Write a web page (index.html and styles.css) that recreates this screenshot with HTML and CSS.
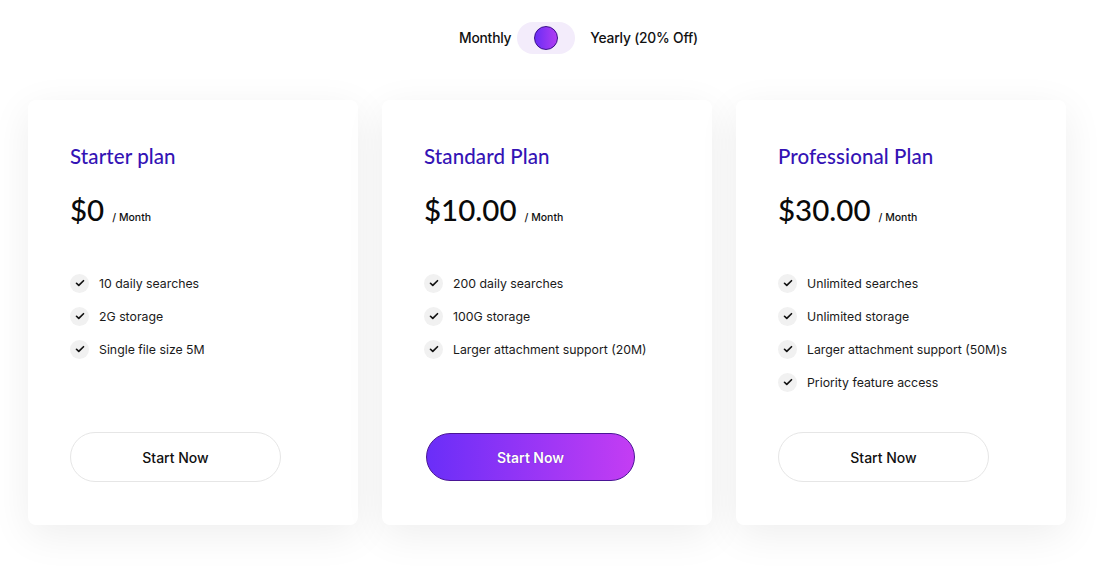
FILE: index.html
```html
<!DOCTYPE html>
<html>
<head>
<meta charset="utf-8">
<link rel="stylesheet" href="styles.css">
</head>
<body>
<div class="page">
  <div class="toggle-row">
    <span class="toggle-label">Monthly</span>
    <div class="toggle"><span class="knob"></span></div>
    <span class="toggle-label">Yearly (20% Off)</span>
  </div>
  <div class="cards">
    <div class="card">
      <h2 class="plan">Starter plan</h2>
      <div class="price"><span class="amount">$0</span><span class="per">/ Month</span></div>
      <ul class="features">
        <li><span class="check"><svg viewBox="0 0 16 16"><path d="M4 8.3l2.6 2.5L12 5.4"/></svg></span>10 daily searches</li>
        <li><span class="check"><svg viewBox="0 0 16 16"><path d="M4 8.3l2.6 2.5L12 5.4"/></svg></span>2G storage</li>
        <li><span class="check"><svg viewBox="0 0 16 16"><path d="M4 8.3l2.6 2.5L12 5.4"/></svg></span>Single file size 5M</li>
      </ul>
      <button class="btn">Start Now</button>
    </div>
    <div class="card">
      <h2 class="plan">Standard Plan</h2>
      <div class="price"><span class="amount">$10.00</span><span class="per">/ Month</span></div>
      <ul class="features">
        <li><span class="check"><svg viewBox="0 0 16 16"><path d="M4 8.3l2.6 2.5L12 5.4"/></svg></span>200 daily searches</li>
        <li><span class="check"><svg viewBox="0 0 16 16"><path d="M4 8.3l2.6 2.5L12 5.4"/></svg></span>100G storage</li>
        <li><span class="check"><svg viewBox="0 0 16 16"><path d="M4 8.3l2.6 2.5L12 5.4"/></svg></span>Larger attachment support (20M)</li>
      </ul>
      <button class="btn primary">Start Now</button>
    </div>
    <div class="card">
      <h2 class="plan">Professional Plan</h2>
      <div class="price"><span class="amount">$30.00</span><span class="per">/ Month</span></div>
      <ul class="features">
        <li><span class="check"><svg viewBox="0 0 16 16"><path d="M4 8.3l2.6 2.5L12 5.4"/></svg></span>Unlimited searches</li>
        <li><span class="check"><svg viewBox="0 0 16 16"><path d="M4 8.3l2.6 2.5L12 5.4"/></svg></span>Unlimited storage</li>
        <li><span class="check"><svg viewBox="0 0 16 16"><path d="M4 8.3l2.6 2.5L12 5.4"/></svg></span>Larger attachment support (50M)s</li>
        <li><span class="check"><svg viewBox="0 0 16 16"><path d="M4 8.3l2.6 2.5L12 5.4"/></svg></span>Priority feature access</li>
      </ul>
      <button class="btn">Start Now</button>
    </div>
  </div>
</div>
</body>
</html>
```
FILE: styles.css
```css
* { box-sizing: border-box; }
html, body { margin: 0; padding: 0; background: #fff; }
body {
  font-family: "Inter", "Noto Sans", sans-serif;
  color: #111;
  width: 1108px;
  height: 573px;
  overflow: hidden;
}
.page {
  padding: 21px 42px 0 28px;
}
.toggle-row {
  display: flex;
  align-items: center;
  height: 33px;
  padding-left: 431px;
}
.toggle-label {
  font-size: 13.8px;
  font-weight: 500;
  color: #111;
  letter-spacing: -0.2px;
}
.toggle {
  width: 58px;
  height: 32px;
  border-radius: 16px;
  background: #f3ecfb;
  display: flex;
  align-items: center;
  padding-left: 17px;
  margin: 0 15px 0 6px;
}
.knob {
  width: 24px;
  height: 24px;
  border-radius: 50%;
  background: linear-gradient(90deg, #6a2df5, #b13df2);
  border: 1.3px solid #3a0f8a;
}
.cards {
  display: flex;
  gap: 24px;
  margin-top: 46px;
}
.card {
  width: 330px;
  height: 425px;
  background: #fff;
  border-radius: 8px;
  box-shadow: 0 10px 40px rgba(0,0,0,0.07);
  padding: 44px 42px 0 42px;
  display: flex;
  flex-direction: column;
  position: relative;
}
.plan {
  margin: 0;
  font-family: "Lato", "Inter", sans-serif;
  font-size: 20.5px;
  font-weight: 500;
  color: #3413b5;
  line-height: 24px;
  letter-spacing: 0.1px;
}
.price {
  display: flex;
  align-items: baseline;
  margin-top: 22px;
  height: 40px;
}
.amount {
  font-family: "Lato", "Inter", sans-serif;
  font-size: 29.5px;
  font-weight: 500;
  color: #0a0a0a;
  line-height: 40px;
}
.per {
  font-size: 10.5px;
  font-weight: 500;
  margin-left: 8px;
  color: #111;
}
.features {
  list-style: none;
  margin: 43px 0 0 0;
  padding: 0;
  display: flex;
  flex-direction: column;
  gap: 13px;
  height: 151px;
}
.features li {
  display: flex;
  align-items: center;
  font-size: 12.3px;
  color: #1a1a1a;
  height: 20px;
}
.check {
  width: 19px;
  height: 19px;
  border-radius: 50%;
  background: #f1f1f1;
  display: flex;
  align-items: center;
  justify-content: center;
  margin-right: 10px;
}
.check svg {
  width: 14px;
  height: 14px;
  fill: none;
  stroke: #111;
  stroke-width: 1.9;
  stroke-linecap: round;
  stroke-linejoin: round;
}
.btn {
  width: 211px;
  height: 50px;
  border-radius: 25px;
  border: 1px solid #e6e6e6;
  background: #fff;
  font-family: "Inter", sans-serif;
  font-size: 14px;
  font-weight: 500;
  color: #111;
  margin-top: 8px;
}
.btn.primary {
  width: 209px;
  height: 48px;
  margin-left: 2px;
  margin-top: 9px;
  background: linear-gradient(90deg, #6a2ef8, #c43df3);
  border: 1px solid #4a1596;
  color: #fff;
  font-weight: 600;
  text-shadow: 0 0 1px rgba(60,0,120,0.6);
}
```
